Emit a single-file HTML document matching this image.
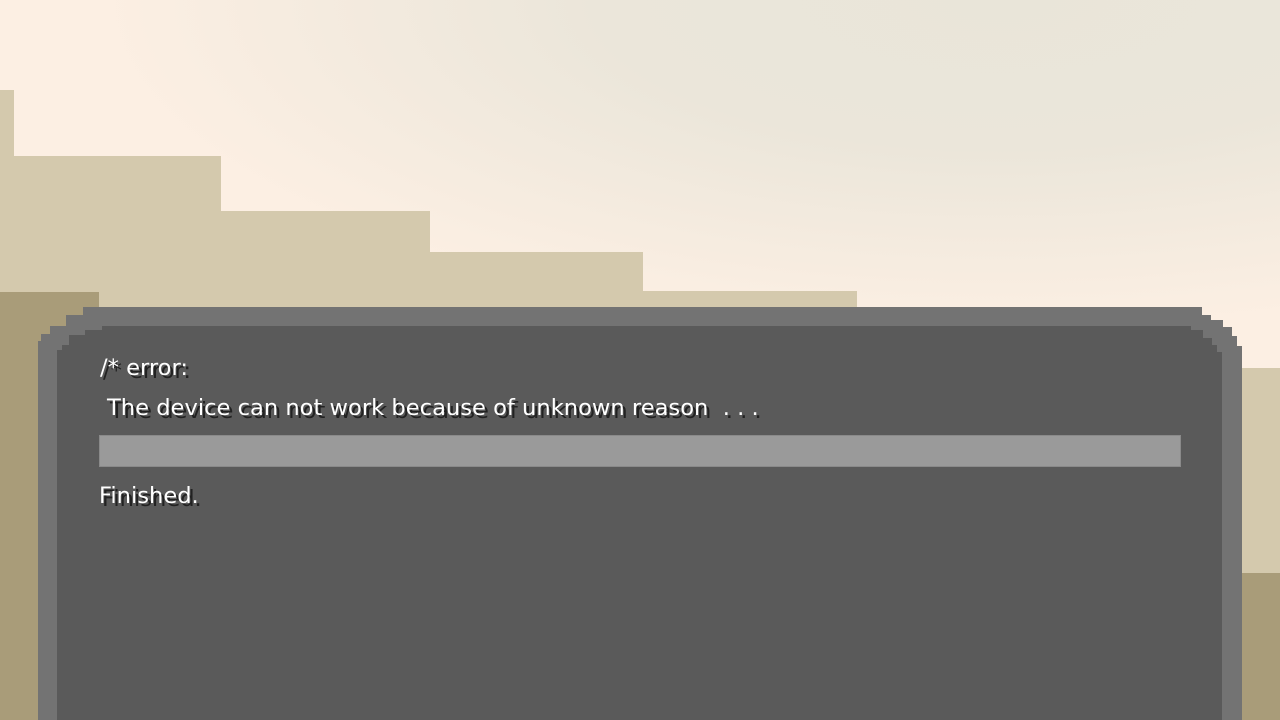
<!DOCTYPE html><html><head><style>
body{margin:0;width:1280px;height:720px;overflow:hidden;position:relative;background:radial-gradient(ellipse 900px 330px at 1000px 0px,#e9e5d9 0%,#ebe6da 45%,#fcefe3 100%) #fcefe3;font-family:"DejaVu Sans","Liberation Sans",sans-serif}
.a{position:absolute;background:#d4c9ad}
.d{position:absolute;background:#a99c79}
#outer{position:absolute;left:0;top:0;width:1280px;height:720px;background:#737373;clip-path:polygon(83px 307px,1202px 307px,1202px 315px,1211px 315px,1211px 320px,1223px 320px,1223px 327px,1232px 327px,1232px 336px,1237px 336px,1237px 346px,1242px 346px,1242px 720px,38px 720px,38px 341px,41px 341px,41px 334px,50px 334px,50px 326px,66px 326px,66px 315px,83px 315px)}
#inner{position:absolute;left:0;top:0;width:1280px;height:720px;background:#5a5a5a;clip-path:polygon(102px 326px,1191px 326px,1191px 330px,1203px 330px,1203px 338px,1212px 338px,1212px 345px,1217px 345px,1217px 352px,1222px 352px,1222px 720px,57px 720px,57px 350px,62px 350px,62px 345px,69px 345px,69px 335px,85px 335px,85px 330px,102px 330px)}
.t{position:absolute;color:#fff;font-size:22.6px;text-shadow:3px 3px 0 #222;white-space:pre}
#bar{position:absolute;left:99px;top:435px;width:1080px;height:30px;background:#9a9a9a;border:1px solid #8a8a8a}
</style></head><body>
<div class="a" style="left:0;top:90px;width:14px;height:630px"></div>
<div class="a" style="left:14px;top:156px;width:207px;height:564px"></div>
<div class="a" style="left:221px;top:211px;width:209px;height:509px"></div>
<div class="a" style="left:430px;top:252px;width:213px;height:468px"></div>
<div class="a" style="left:643px;top:291px;width:214px;height:429px"></div>
<div class="a" style="left:1242px;top:368px;width:38px;height:352px"></div>
<div class="d" style="left:0;top:292px;width:99px;height:428px"></div>
<div class="d" style="left:1242px;top:573px;width:38px;height:147px"></div>
<div id="outer"></div><div id="inner"></div>
<div class="t" style="left:100px;top:355px">/* error:</div>
<div class="t" style="left:107px;top:395px">The device can not work because of unknown reason  . . .</div>
<div id="bar"></div>
<div class="t" style="left:99px;top:483px">Finished.</div>
</body></html>
